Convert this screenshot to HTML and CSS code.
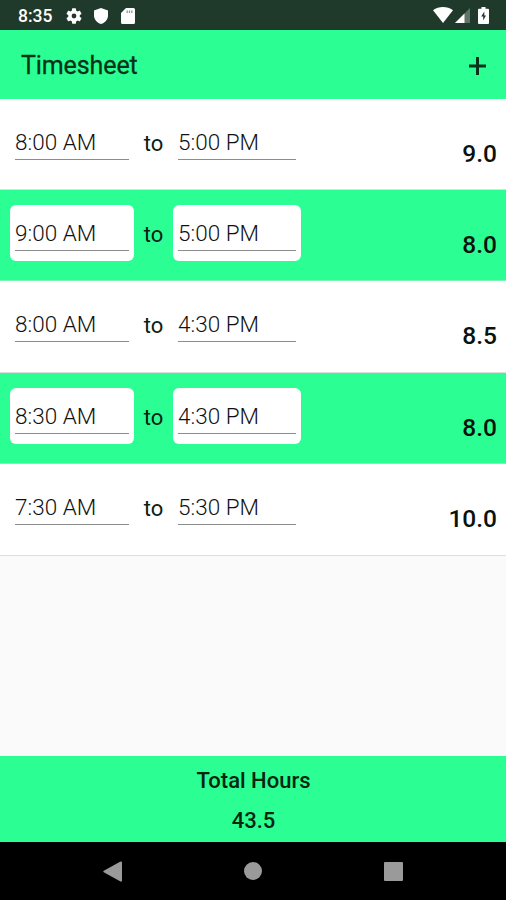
FILE: index.html
```
<!DOCTYPE html>
<html lang="en">
<head>
    <meta charset="UTF-8">
    <meta name="viewport" content="width=device-width, initial-scale=1.0">
    <title>Timesheet</title>
    <link rel="stylesheet" href="styles.css">
</head>
<body>

<div class="phone">
    <div class="status-bar">
        <span class="clock">8:35</span>
        <svg class="icon gear" viewBox="2 2 20 20"><path fill="#fff" d="M19.14 12.94c.04-.3.06-.61.06-.94s-.02-.64-.07-.94l2.03-1.58a.49.49 0 0 0 .12-.61l-1.92-3.32a.49.49 0 0 0-.59-.22l-2.39.96a7 7 0 0 0-1.62-.94l-.36-2.54a.48.48 0 0 0-.48-.41h-3.84a.48.48 0 0 0-.47.41l-.36 2.54a7.3 7.3 0 0 0-1.62.94l-2.39-.96a.48.48 0 0 0-.59.22L2.74 8.87a.48.48 0 0 0 .12.61l2.03 1.58a6 6 0 0 0 0 1.88l-2.03 1.58a.49.49 0 0 0-.12.61l1.92 3.32c.12.22.37.29.59.22l2.39-.96c.5.38 1.03.7 1.62.94l.36 2.54c.05.24.24.41.48.41h3.84c.24 0 .44-.17.47-.41l.36-2.54a7 7 0 0 0 1.62-.94l2.39.96c.22.08.47 0 .59-.22l1.92-3.32a.48.48 0 0 0-.12-.61zM12 15a3 3 0 1 1 0-6 3 3 0 0 1 0 6z"/></svg>
        <svg class="icon shield" viewBox="0 0 14 16"><path fill="#fff" d="M7 0l7 2.6V7.5c0 4-2.8 7.2-7 8.5-4.2-1.3-7-4.5-7-8.5V2.6z"/></svg>
        <svg class="icon card" viewBox="0 0 14 16"><path fill="#fff" d="M5 0h7.5A1.5 1.5 0 0 1 14 1.5v13a1.5 1.5 0 0 1-1.5 1.5h-11A1.5 1.5 0 0 1 0 14.5V5z"/><path stroke="#8b9a91" stroke-width="1.3" d="M6.2 2.5v2.5M8.5 2.5v2.5M10.8 2.5v2.5"/></svg>
        <svg class="icon wifi" viewBox="0 0 20 16"><path fill="#fff" d="M0 3.3C6-1.1 14-1.1 20 3.3L10 16z"/></svg>
        <svg class="icon signal" viewBox="0 0 15 15"><path fill="#5f7367" d="M15 0v15H0z"/><path fill="#fff" d="M9.5 5.5V15H0z"/></svg>
        <svg class="icon battery" viewBox="0 0 11 17"><path fill="#fff" d="M3.5 0h4v1.7H10a1 1 0 0 1 1 1V16a1 1 0 0 1-1 1H1a1 1 0 0 1-1-1V2.7a1 1 0 0 1 1-1h2.5z"/><path fill="#1f3a2a" d="M6.3 4.5L3.2 9.5h2v4L8 8.5H6.3z"/></svg>
    </div>

    <div class="toolbar">
        <h1 class="title">Timesheet</h1>
        <svg class="add" viewBox="0 0 17 18"><path stroke="#07331b" stroke-width="3" d="M8.5 0v18M0 9h17"/></svg>
    </div>

    <div class="list">
        <div class="row">
            <div class="time start"><span>8:00 AM</span></div>
            <span class="to">to</span>
            <div class="time end"><span>5:00 PM</span></div>
            <span class="hours">9.0</span>
        </div>
        <div class="row green">
            <div class="time start"><span>9:00 AM</span></div>
            <span class="to">to</span>
            <div class="time end"><span>5:00 PM</span></div>
            <span class="hours">8.0</span>
        </div>
        <div class="row">
            <div class="time start"><span>8:00 AM</span></div>
            <span class="to">to</span>
            <div class="time end"><span>4:30 PM</span></div>
            <span class="hours">8.5</span>
        </div>
        <div class="row green">
            <div class="time start"><span>8:30 AM</span></div>
            <span class="to">to</span>
            <div class="time end"><span>4:30 PM</span></div>
            <span class="hours">8.0</span>
        </div>
        <div class="row">
            <div class="time start"><span>7:30 AM</span></div>
            <span class="to">to</span>
            <div class="time end"><span>5:30 PM</span></div>
            <span class="hours">10.0</span>
        </div>
    </div>

    <div class="total">
        <div>Total Hours</div>
        <div>43.5</div>
    </div>

    <div class="nav-bar">
        <svg class="back" viewBox="0 0 19 21"><path fill="#9a9a9a" d="M18 .5a1 1 0 0 1 1 1v18a1 1 0 0 1-1.5 1L.8 11.3a1 1 0 0 1 0-1.6L17.5.5z"/></svg>
        <div class="home"></div>
        <div class="recent"></div>
    </div>
</div>

</body>
</html>
```
FILE: styles.css
```
* {
    box-sizing: border-box;
}
body {
    margin: 0;
    font-family: Roboto, "Liberation Sans", sans-serif;
    background-color: #fafafa;
}
.phone {
    width: 506px;
    height: 900px;
    display: flex;
    flex-direction: column;
    overflow: hidden;
}
.status-bar {
    height: 30px;
    flex: none;
    display: flex;
    align-items: center;
    padding: 1px 17px 0 18px;
    background-color: #1f3a2a;
}
.clock {
    width: 48px;
    font-size: 17.5px;
    font-weight: 500;
    line-height: 20px;
    color: #fff;
}
.icon {
    flex: none;
    height: 16px;
}
.gear {
    width: 16px;
}
.shield {
    width: 14px;
    margin-left: 12px;
}
.card {
    width: 14px;
    margin-left: 13px;
}
.wifi {
    width: 20px;
    margin-left: auto;
    margin-top: -2px;
}
.signal {
    width: 15px;
    height: 15px;
    margin: 0 0 0 2px;
}
.battery {
    width: 11px;
    height: 17px;
    margin: -1px 0 0 8px;
}
.toolbar {
    height: 68.6px;
    flex: none;
    display: flex;
    align-items: center;
    justify-content: space-between;
    padding: 3px 20px 0 21px;
    background-color: #2bff93;
}
.title {
    margin: 0;
    font-size: 25px;
    font-weight: 400;
    line-height: 30px;
    letter-spacing: -0.1px;
    color: #07331b;
    -webkit-text-stroke: 0.3px #07331b;
}
.add {
    width: 17px;
    height: 18px;
}
.list {
    flex: 1;
}
.row {
    height: 91.4px;
    display: flex;
    align-items: flex-start;
    padding: 15px 9px 0 10px;
    background-color: #fff;
    border-bottom: 1px solid #dedede;
}
.row.green {
    background-color: #2bff93;
    border-bottom-color: #7df0b3;
}
.time {
    height: 56px;
    padding: 13px 5px 0;
    border-radius: 6px;
    background-color: #fff;
}
.time span {
    display: block;
    height: 33px;
    border-bottom: 1px solid #8c8c8c;
    font-size: 22.5px;
    font-weight: 300;
    line-height: 30px;
    color: #111;
}
.start {
    width: 124px;
}
.end {
    width: 128px;
}
.to {
    width: 39px;
    padding-top: 16px;
    text-align: center;
    font-size: 22px;
    line-height: 28px;
    color: #0c2015;
}
.hours {
    margin-left: auto;
    padding-top: 25px;
    font-size: 24.5px;
    font-weight: 500;
    line-height: 30px;
    color: #0a120d;
}
.total {
    height: 86px;
    flex: none;
    padding: 5px 0 0 1px;
    text-align: center;
    font-size: 22px;
    font-weight: 500;
    line-height: 39.5px;
    color: #06260f;
    background-color: #2bff93;
}
.nav-bar {
    height: 58px;
    flex: none;
    display: flex;
    align-items: center;
    justify-content: space-between;
    padding: 0 103px;
    background-color: #000;
}
.back {
    width: 19px;
    height: 21px;
}
.home {
    width: 18px;
    height: 18px;
    border-radius: 50%;
    background-color: #9a9a9a;
}
.recent {
    width: 19px;
    height: 19px;
    border-radius: 1px;
    background-color: #9a9a9a;
}
```
